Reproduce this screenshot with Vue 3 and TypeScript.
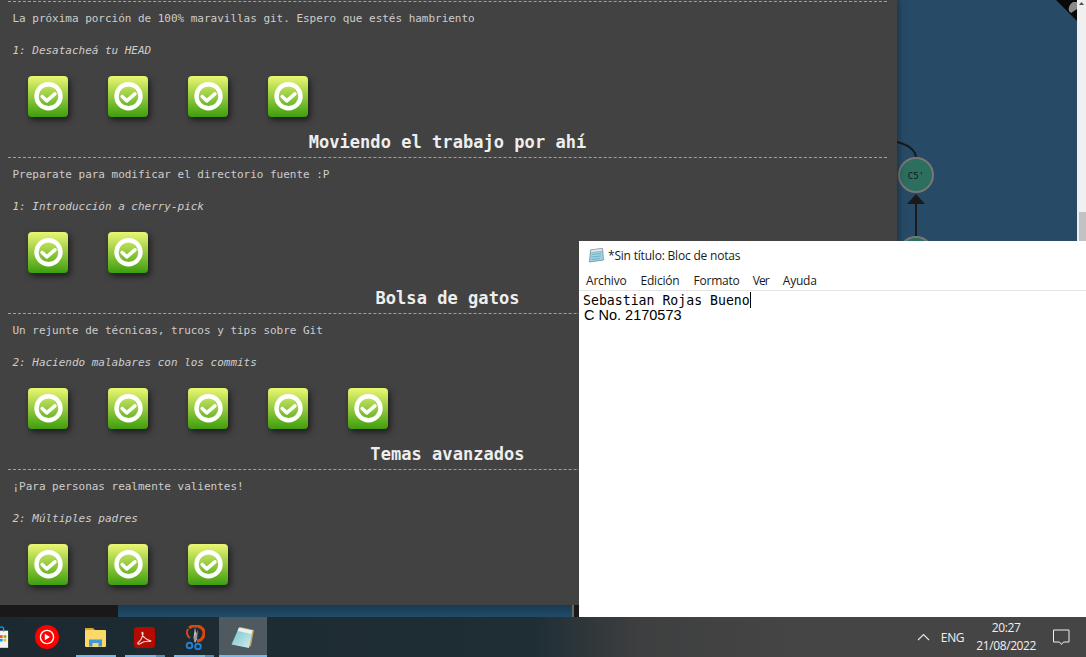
<script setup lang="ts">
interface Section {
  title: string;
  desc: string;
  level: string;
  count: number;
}

const sections: Section[] = [
  { title: '', desc: 'La próxima porción de 100% maravillas git. Espero que estés hambriento', level: '1: Desatacheá tu HEAD', count: 4 },
  { title: 'Moviendo el trabajo por ahí', desc: 'Preparate para modificar el directorio fuente :P', level: '1: Introducción a cherry-pick', count: 2 },
  { title: 'Bolsa de gatos', desc: 'Un rejunte de técnicas, trucos y tips sobre Git', level: '2: Haciendo malabares con los commits', count: 5 },
  { title: 'Temas avanzados', desc: '¡Para personas realmente valientes!', level: '2: Múltiples padres', count: 3 }
];

const menus = ['Archivo', 'Edición', 'Formato', 'Ver', 'Ayuda'];
</script>

<template>
  <div class="desktop">
    <div class="workspace">
      <div class="left-col">
        <div class="panel">
          <section v-for="s in sections" :key="s.level" class="sec">
            <h2 v-if="s.title" class="sec-title">{{ s.title }}</h2>
            <div class="rule"></div>
            <p class="desc">{{ s.desc }}</p>
            <p class="level">{{ s.level }}</p>
            <div class="badges">
              <div v-for="n in s.count" :key="n" class="badge">
                <svg width="40" height="41" viewBox="0 0 40 41">
                  <circle cx="20.500" cy="20.300" r="12" fill="none" stroke="#fff" stroke-width="4.400" />
                  <path d="M14.200 20.500l4.500 4.300 8.200-7" fill="none" stroke="#fff" stroke-width="3.600" stroke-linecap="round" stroke-linejoin="round" />
                </svg>
              </div>
            </div>
          </section>
        </div>
        <div class="strip">
          <div class="strip-dark"></div>
          <div class="strip-blue"></div>
          <div class="strip-edge"></div>
          <div class="strip-end"></div>
        </div>
      </div>

      <div class="canvas">
        <svg class="tree" width="180" height="617" viewBox="0 0 180 617">
          <path d="M0 142 C12 145 18 150 19 157" fill="none" stroke="#1a1a1a" stroke-width="2" />
          <circle cx="19" cy="175" r="17" fill="#2c6e5f" stroke="#777" stroke-width="2" />
          <text x="19" y="178.500" text-anchor="middle" class="node-label">C5'</text>
          <polygon points="19,194 10,204 28,204" fill="#1a1a1a" />
          <line x1="19" y1="204" x2="19" y2="238" stroke="#1a1a1a" stroke-width="2" />
          <circle cx="19" cy="254" r="17" fill="#2c6e5f" stroke="#777" stroke-width="2" />
          <polygon points="159,0 180,0 180,21" fill="#0a0a0a" />
          <path d="M176 2c-3 2-5 5-4 9l2 2 6-4V2z" fill="#8a8a8a" />
        </svg>
      </div>

      <div class="scrollbar">
        <svg class="scroll-up" width="9" height="9" viewBox="0 0 9 9"><path d="M2 5l2.500-3 2.500 3z" fill="#505050" /></svg>
        <div class="scroll-thumb"></div>
      </div>

      <div class="notepad">
        <div class="np-title">
          <svg width="18" height="18" viewBox="0 0 18 18">
            <path d="M3.500 3l12-1.500 1 11.500-14 2z" fill="#9fd3e0" stroke="#6f8f9e" stroke-width=".8" />
            <path d="M3.500 3l12-1.500.2 2.500-12 1.500z" fill="#e8eef0" stroke="#7a8a92" stroke-width=".5" />
            <path d="M4.500 7.500l9.500-1M4.500 10l9.500-1M4.500 12.500l8.500-1" stroke="#5ea3b8" stroke-width=".7" />
          </svg>
          <span>*Sin título: Bloc de notas</span>
        </div>
        <div class="np-menu">
          <span v-for="m in menus" :key="m">{{ m }}</span>
        </div>
        <div class="np-body">
          <div class="np-line1">Sebastian Rojas Bueno<i class="caret"></i></div>
          <div class="np-line2">C No. 2170573</div>
        </div>
      </div>
    </div>

    <div class="taskbar">
      <div class="tb-apps">
        <div class="app app-store">
          <svg width="10" height="26" viewBox="0 0 10 26">
            <path d="M0 6h9v19H0z" fill="#f4f4f4" />
            <path d="M0 2h3c.8 0 1 1 1 2v3" fill="none" stroke="#1e9be0" stroke-width="1.600" />
            <rect x="0" y="11" width="3" height="3" fill="#f25022" />
            <rect x="4" y="11" width="3" height="3" fill="#7fba00" />
            <rect x="0" y="15" width="3" height="3" fill="#00a4ef" />
            <rect x="4" y="15" width="3" height="3" fill="#ffb900" />
          </svg>
        </div>
        <div class="app app-yt">
          <svg width="24" height="24" viewBox="0 0 24 24">
            <circle cx="12" cy="12" r="12" fill="#fe0000" />
            <circle cx="12" cy="12" r="6.600" fill="none" stroke="#fff" stroke-width="1.400" />
            <path d="M9.800 8.800v6.400l5.200-3.200z" fill="#fff" />
          </svg>
        </div>
        <div class="app app-run">
          <svg width="22" height="20" viewBox="0 0 22 20">
            <path d="M0 1h8l2 2h0v3H0z" fill="#e0a526" />
            <rect x="0" y="3" width="21" height="17" rx="1" fill="#fcd769" />
            <path d="M4 19.500v-7h13v7h-3.500v-3.500h-6v3.500z" fill="#3c99dc" />
          </svg>
        </div>
        <div class="app app-run">
          <svg width="21" height="21" viewBox="0 0 21 21">
            <rect width="21" height="21" rx="3" fill="#b30b00" />
            <path d="M4 15.500c2-1 4.500-5 5-8.500.2-1.500-.8-2.500-1-1 0 3 4 7 8 7.500 1.500.2 1 1-.5.800-3-.2-7 .6-9 2.200-1.500 1.200-3 .5-2.500-.5z" fill="none" stroke="#f2d6d3" stroke-width="1.200" />
          </svg>
        </div>
        <div class="app app-snip">
          <svg width="20" height="25" viewBox="0 0 20 25">
            <path d="M4 3C9-1 18 1 19 7c.5 5-3 9-7 9" fill="none" stroke="#d9480f" stroke-width="3" />
            <path d="M3 4c-2 3-1 7 2 9" fill="none" stroke="#d9480f" stroke-width="2" />
            <path d="M10 2l2 12-2 4-1.500-5z" fill="#c8c8c8" />
            <path d="M13 5l-1 9-3 3 0-5z" fill="#9a9a9a" />
            <circle cx="4.500" cy="20.500" r="2.800" fill="none" stroke="#1f7fd6" stroke-width="2" />
            <circle cx="13" cy="21.500" r="2.800" fill="none" stroke="#1f7fd6" stroke-width="2" />
          </svg>
        </div>
        <div class="app app-active">
          <svg width="24" height="23" viewBox="0 0 24 23">
            <defs>
              <linearGradient id="padFill" x1="0" y1="0" x2="1" y2="1">
                <stop offset="0" stop-color="#6fc0c8" />
                <stop offset="1" stop-color="#d5f0f2" />
              </linearGradient>
            </defs>
            <path d="M9 1L23 4l-3 16-4 1z" fill="#c9a05a" />
            <path d="M8 1.500L21.500 4.500 18 22 .5 18.500z" fill="url(#padFill)" />
            <path d="M8 1.500L21.500 4.500 20.700 8 6.500 5z" fill="#e9eeee" />
          </svg>
        </div>
      </div>
      <div class="underlines">
        <i class="u u1"></i><i class="u u2"></i><i class="u u3"></i><i class="u u4"></i>
      </div>
      <div class="tray">
        <svg width="13" height="8" viewBox="0 0 13 8"><path d="M1 7l5.500-5.500L12 7" fill="none" stroke="#e8e8e8" stroke-width="1.100" /></svg>
        <span class="lang">ENG</span>
        <div class="clock">
          <span>20:27</span>
          <span>21/08/2022</span>
        </div>
        <svg width="17" height="17" viewBox="0 0 17 17"><path d="M.5 1h15.500v12H10.500l-2 2.500-2-2.500H.5z" fill="none" stroke="#f0f0f0" stroke-width="1" /></svg>
      </div>
    </div>
  </div>
</template>

<style scoped>
.desktop {
  width: 1086px;
  height: 657px;
  display: flex;
  flex-direction: column;
  overflow: hidden;
  background: #274b66;
}

.workspace {
  position: relative;
  flex: 1;
  display: flex;
  min-height: 0;
}

.left-col {
  width: 897px;
  display: flex;
  flex-direction: column;
  flex-shrink: 0;
  position: relative;
  z-index: 1;
}

.panel {
  height: 605px;
  padding: 1px 10px 0 8px;
  box-sizing: border-box;
  overflow: hidden;
  background: #424242;
  box-shadow: 0 0 8px rgba(0, 0, 0, 0.5);
  color: #cdcdcd;
  font-family: "DejaVu Sans Mono", monospace;
  font-size: 11px;
  letter-spacing: -0.02px;
}

.sec-title {
  margin: 14px 0 4px;
  height: 22px;
  line-height: 22px;
  font-size: 17px;
  font-weight: bold;
  text-align: center;
  color: #eeeeee;
  letter-spacing: 0.05px;
}

.rule {
  border-top: 1px dashed #a0a0a0;
}

.desc {
  margin: 9px 0 0 4.500px;
  line-height: 16px;
}

.level {
  margin: 16px 0 0 4.500px;
  line-height: 16px;
  font-style: italic;
}

.badges {
  display: flex;
  gap: 40px;
  margin: 17px 0 0 20px;
}

.badge {
  width: 40px;
  height: 41px;
  border-radius: 4px;
  background: linear-gradient(#eaf772, #3e9e0e);
  box-shadow: 2px 3px 6px rgba(0, 0, 0, 0.6);
}

.badge svg {
  display: block;
}

.strip {
  flex: 1;
  display: flex;
}

.strip-dark {
  width: 118px;
  background: #191919;
}

.strip-blue {
  width: 454px;
  background: linear-gradient(#1b3a50, #1f4c69);
}

.strip-edge {
  width: 2px;
  background: #666;
}

.strip-end {
  flex: 1;
  background: #191919;
}

.canvas {
  position: relative;
  flex: 1;
  background: #274b66;
}

.tree {
  position: absolute;
  left: 0;
  top: 0;
  z-index: 0;
}

.node-label {
  font-family: "DejaVu Sans Mono", monospace;
  font-size: 9px;
  fill: #0c1a14;
}

.scrollbar {
  width: 9px;
  background: #f0f0f0;
  position: relative;
}

.scroll-up {
  position: absolute;
  top: 0;
  left: 0;
}

.scroll-thumb {
  position: absolute;
  left: 2px;
  right: 0;
  top: 212px;
  height: 60px;
  background: #c2c2c2;
}

.notepad {
  position: absolute;
  left: 579px;
  top: 241px;
  right: 0;
  bottom: 0;
  z-index: 2;
  background: #fff;
  font-family: "Open Sans", "Noto Sans", sans-serif;
  color: #1a1a1a;
}

.np-title {
  height: 29px;
  display: flex;
  align-items: center;
  gap: 3px;
  padding-left: 8px;
  font-size: 12px;
  letter-spacing: -0.2px;
}

.np-menu {
  height: 20px;
  display: flex;
  align-items: center;
  gap: 14px;
  padding-left: 7px;
  border-bottom: 1px solid #e4e4e4;
  font-size: 12px;
  letter-spacing: -0.2px;
}

.np-menu span:nth-child(4) {
  margin-left: -1px;
  letter-spacing: -0.9px;
}

.np-body {
  padding: 1px 0 0 4px;
}

.np-line1 {
  height: 16px;
  line-height: 15px;
  font-family: "DejaVu Sans Mono", monospace;
  font-size: 13.200px;
  color: #000;
  white-space: nowrap;
}

.caret {
  display: inline-block;
  width: 1px;
  height: 16px;
  background: #000;
  vertical-align: -3px;
}

.np-line2 {
  height: 15px;
  line-height: 15px;
  margin-left: 1px;
  font-family: "Liberation Sans", Arial, sans-serif;
  font-size: 14.500px;
  color: #000;
}

.taskbar {
  position: relative;
  height: 40px;
  flex-shrink: 0;
  display: flex;
  align-items: center;
  justify-content: space-between;
  background: linear-gradient(90deg, #1c2930 0, #1f2d35 530px, #3e3f40 640px, #454545 800px);
}

.tb-apps {
  display: flex;
  height: 100%;
  align-items: center;
}

.app {
  height: 100%;
  display: flex;
  align-items: center;
  justify-content: center;
  flex-shrink: 0;
}

.app-store {
  width: 9px;
  justify-content: flex-start;
  overflow: hidden;
}

.app-yt {
  width: 62px;
  padding-left: 26px;
  box-sizing: border-box;
  justify-content: flex-start;
}

.app-run {
  width: 49px;
}

.app-snip {
  width: 50px;
  padding-left: 2px;
  box-sizing: border-box;
}

.app-active {
  width: 48px;
  background: #4e5a60;
}

.underlines {
  position: absolute;
  left: 0;
  bottom: 0;
  width: 100%;
  height: 2px;
}

.u {
  position: absolute;
  top: 0;
  height: 2px;
  background: #76b9ed;
}

.u1 { left: 76px; width: 40px; }
.u2 { left: 125px; width: 40px; background: linear-gradient(90deg, #76b9ed 31px, #5a8fb8 31px); }
.u3 { left: 174px; width: 40px; background: linear-gradient(90deg, #76b9ed 31px, #5a8fb8 31px); }
.u4 { left: 219px; width: 48px; }

.tray {
  display: flex;
  align-items: center;
  color: #f0f0f0;
  font-family: "Open Sans", "Noto Sans", sans-serif;
  font-size: 12px;
  letter-spacing: -0.3px;
  padding-right: 16px;
}

.lang {
  margin: 0 0 0 11px;
}

.clock {
  display: flex;
  flex-direction: column;
  align-items: center;
  margin: 0 17px 0 12px;
  line-height: 18px;
  letter-spacing: -0.4px;
}
</style>

<style>
html,
body {
  margin: 0;
  background: #000;
}
</style>
